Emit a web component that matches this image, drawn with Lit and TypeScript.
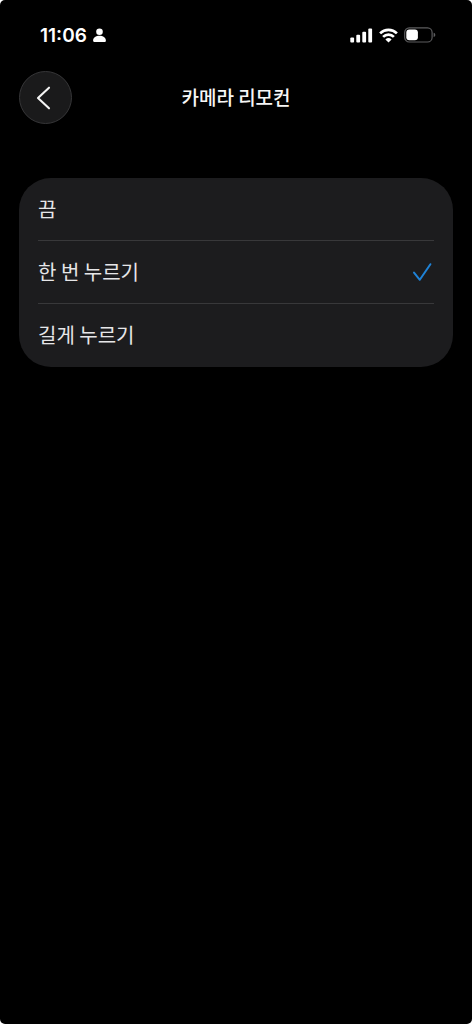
import { LitElement, html, css } from "lit";
import { customElement, state } from "lit/decorators.js";

@customElement("status-bar")
class StatusBar extends LitElement {
  static styles = css`
    :host {
      display: flex;
      justify-content: space-between;
      align-items: center;
      height: 24px;
      padding: 23px 36px 0 40px;
      color: #fff;
    }
    .group {
      display: flex;
      align-items: center;
      gap: 6px;
    }
    .time {
      padding-top: 2px;
      font: 600 19px/24px Inter, sans-serif;
    }
    svg {
      display: block;
    }
  `;

  render() {
    return html`
      <div class="group">
        <span class="time">11:06</span>
        <svg width="13" height="14" viewBox="0 0 13 14" fill="currentColor" aria-hidden="true">
          <circle cx="6.5" cy="3.7" r="3.3" />
          <path d="M0.1 12.7C0.1 9.5 3 7.8 6.5 7.8s6.4 1.7 6.4 4.9c0 .8-.4 1.2-1.1 1.2H1.2c-.7 0-1.1-.4-1.1-1.2z" />
        </svg>
      </div>
      <div class="group">
        <svg width="23" height="15" viewBox="0 0 23 15" fill="currentColor" aria-hidden="true">
          <rect x="0.3" y="9.4" width="3.8" height="5.2" rx="1" />
          <rect x="6.3" y="6.8" width="3.8" height="7.8" rx="1" />
          <rect x="12.3" y="3.8" width="3.8" height="10.8" rx="1" />
          <rect x="18.3" y="0.5" width="3.8" height="14.1" rx="1" />
        </svg>
        <svg width="19" height="15" viewBox="0 0 19 15" aria-hidden="true">
          <g fill="none" stroke="currentColor" stroke-width="2.7">
            <path d="M1.1 5.4a12 12 0 0 1 16.8 0" />
            <path d="M4.1 8.9a7.7 7.7 0 0 1 10.8 0" />
          </g>
          <path fill="currentColor" d="M9.5 14.6L6.4 11.5a4.5 4.5 0 0 1 6.2 0z" />
        </svg>
        <svg width="32" height="16" viewBox="0 0 32 16" aria-hidden="true">
          <rect x="0.7" y="0.8" width="27.4" height="14.2" rx="4.6" fill="none" stroke="#5c5c5e" stroke-width="1.2" />
          <rect x="2.3" y="2.5" width="11.6" height="10.8" rx="3" fill="currentColor" />
          <path d="M29.6 5.7c1.1.4 1.7 1.2 1.7 2.2s-.6 1.8-1.7 2.2z" fill="#5c5c5e" />
        </svg>
      </div>
    `;
  }
}

interface Option {
  id: string;
  label: string;
}

@customElement("app-root")
class AppRoot extends LitElement {
  static styles = css`
    :host {
      display: block;
      background: #fff;
      font-family: "Noto Sans CJK KR", sans-serif;
    }
    .screen {
      min-height: 100vh;
      background: #000;
      border-radius: 5px;
      color: #f6f6f6;
    }
    .nav {
      display: grid;
      grid-template-columns: 53px 1fr 53px;
      align-items: center;
      padding: 24px 19px 0;
    }
    .back {
      display: grid;
      place-items: center;
      width: 53px;
      height: 53px;
      padding: 0 1px 0 0;
      border: 1px solid #363638;
      border-radius: 50%;
      background: #1a1a1b;
      color: #f4f4f4;
    }
    .title {
      margin: 0;
      padding-bottom: 2px;
      font-size: 19px;
      line-height: 28px;
      font-weight: 500;
      text-align: center;
    }
    .card {
      margin: 54px 19px 0;
      padding: 0 19px;
      border-radius: 32px;
      background: #1c1c1e;
      color: #e6e6e8;
    }
    .row {
      display: flex;
      align-items: center;
      justify-content: space-between;
      height: 63px;
      box-sizing: border-box;
      border-bottom: 1px solid #38383a;
      font-size: 20px;
      line-height: 28px;
      cursor: pointer;
    }
    .row:last-child {
      border-color: transparent;
    }
    .choice {
      display: grid;
      place-items: center;
      width: 22px;
      height: 22px;
    }
    .radio,
    .check {
      grid-area: 1 / 1;
    }
    .radio {
      appearance: none;
      width: 22px;
      height: 22px;
      margin: 0;
      outline-offset: 2px;
    }
    .check {
      visibility: hidden;
      pointer-events: none;
    }
    .radio:checked + .check {
      visibility: visible;
    }
  `;

  @state() private selected = "single";

  private options: Option[] = [
    { id: "off", label: "끔" },
    { id: "single", label: "한 번 누르기" },
    { id: "long", label: "길게 누르기" },
  ];

  render() {
    return html`
      <div class="screen">
        <status-bar></status-bar>
        <header class="nav">
          <button class="back" type="button" aria-label="뒤로">
            <svg width="24" height="24" viewBox="0 0 24 24" fill="none" stroke="currentColor" stroke-width="2.1" stroke-linecap="round" stroke-linejoin="round" aria-hidden="true">
              <path d="M16 1.7L5 12l11 10.3" />
            </svg>
          </button>
          <h1 class="title">카메라 리모컨</h1>
        </header>
        <main class="card" role="radiogroup" aria-label="카메라 리모컨">
          ${this.options.map(
            (o) => html`
              <label class="row" for=${o.id}>
                <span>${o.label}</span>
                <span class="choice">
                  <input
                    class="radio"
                    type="radio"
                    name="remote"
                    id=${o.id}
                    .checked=${this.selected === o.id}
                    @change=${() => (this.selected = o.id)}
                  />
                  <svg class="check" width="22" height="22" viewBox="0 0 22 22" fill="none" stroke="#1f82d6" stroke-width="2" stroke-linecap="round" stroke-linejoin="round" aria-hidden="true">
                    <path d="M2 11.6L7.8 18.8 18.4 3.2" />
                  </svg>
                </span>
              </label>
            `
          )}
        </main>
      </div>
    `;
  }
}
